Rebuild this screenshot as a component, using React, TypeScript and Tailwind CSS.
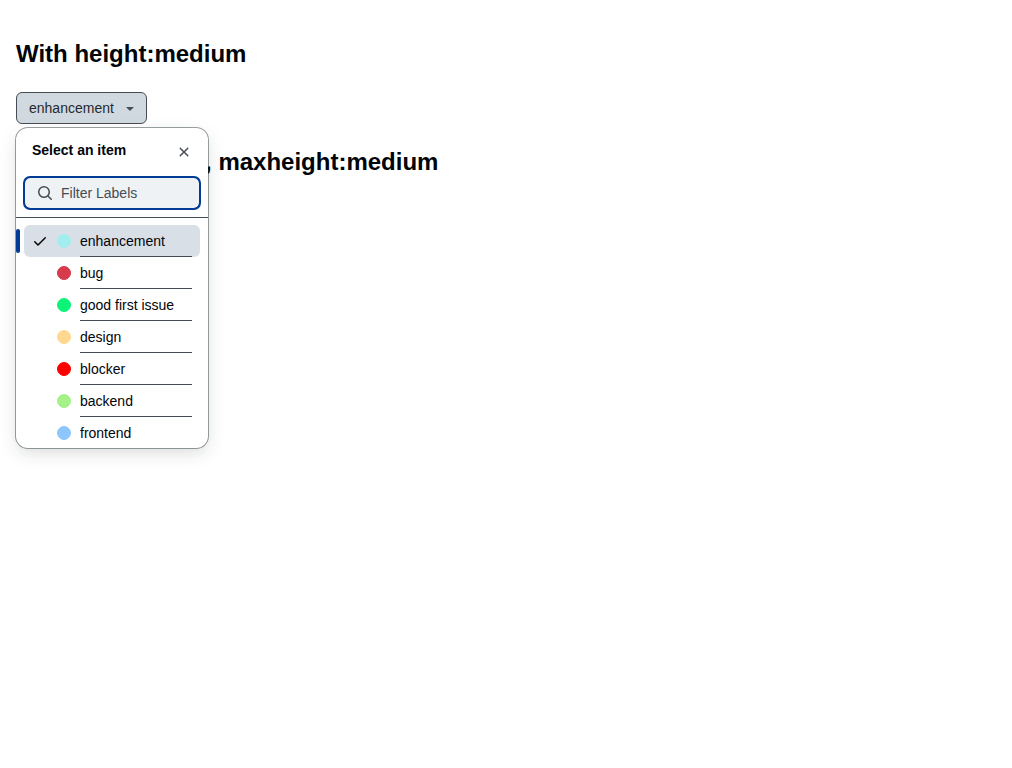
import React from 'react';

type Label = { name: string; dot: string };

const labels: Label[] = [
  { name: 'enhancement', dot: 'bg-[#a2eeef] border-[#a2eeef]' },
  { name: 'bug', dot: 'bg-[#d73a4a] border-[#d73a4a]' },
  { name: 'good first issue', dot: 'bg-[#0cf478] border-[#0cf478]' },
  { name: 'design', dot: 'bg-[#ffd78e] border-[#ffd78e]' },
  { name: 'blocker', dot: 'bg-[#ff0000] border-[#ff0000]' },
  { name: 'backend', dot: 'bg-[#a4f287] border-[#a4f287]' },
  { name: 'frontend', dot: 'bg-[#8dc6fc] border-[#8dc6fc]' },
];

function Icon({ d, className = '' }: { d: string; className?: string }) {
  return (
    <svg viewBox="0 0 16 16" width="16" height="16" fill="currentColor" aria-hidden="true" className={`shrink-0 ${className}`}>
      <path d={d} />
    </svg>
  );
}

const caret = 'm4.427 7.427 3.396 3.396a.25.25 0 0 0 .354 0l3.396-3.396A.25.25 0 0 0 11.396 7H4.604a.25.25 0 0 0-.177.427Z';
const cross =
  'M3.72 3.72a.75.75 0 0 1 1.06 0L8 6.94l3.22-3.22a.749.749 0 0 1 1.275.326.749.749 0 0 1-.215.734L9.06 8l3.22 3.22a.749.749 0 0 1-.326 1.275.749.749 0 0 1-.734-.215L8 9.06l-3.22 3.22a.751.751 0 0 1-1.042-.018.751.751 0 0 1-.018-1.042L6.94 8 3.72 4.78a.75.75 0 0 1 0-1.06Z';
const search =
  'M10.68 11.74a6 6 0 0 1-7.922-8.982 6 6 0 0 1 8.982 7.922l3.04 3.04a.749.749 0 0 1-.326 1.275.749.749 0 0 1-.734-.215ZM11.5 7a4.499 4.499 0 1 0-8.997 0A4.499 4.499 0 0 0 11.5 7Z';
const check =
  'M13.78 4.22a.75.75 0 0 1 0 1.06l-7.25 7.25a.75.75 0 0 1-1.06 0L2.22 9.28a.751.751 0 0 1 .018-1.042.751.751 0 0 1 1.042-.018L6 10.94l6.72-6.72a.75.75 0 0 1 1.06 0Z';

function Row({ label, selected, last }: { label: Label; selected: boolean; last: boolean }) {
  return (
    <li
      role="option"
      aria-selected={selected}
      className={`relative mx-2 flex h-8 items-stretch rounded-md px-2 ${selected ? 'bg-[#d9dfe7]' : ''}`}
    >
      {selected && <span className="absolute top-1 -left-2 h-6 w-1 rounded-md bg-[#023b95]" />}
      <span className="flex w-4 items-center">{selected && <Icon d={check} />}</span>
      <span className="ml-2 flex w-4 items-center justify-center">
        <span className={`size-3.5 rounded-full border ${label.dot}`} />
      </span>
      <span className={`ml-2 flex grow items-center border-b pt-px leading-5 ${last ? 'border-transparent' : 'border-[#454c54]'}`}>
        {label.name}
      </span>
    </li>
  );
}

function SelectPanel() {
  return (
    <div className="absolute top-9 left-0 h-80 w-48 overflow-hidden rounded-xl bg-white shadow-[0_0_0_1px_rgba(32,44,48,0.45),0_6px_12px_-3px_rgba(37,41,46,0.04),0_6px_18px_0_rgba(37,41,46,0.12)]">
      <header className="flex h-[49px] items-start justify-between pt-2 pr-2 pl-4">
        <h3 className="pt-1 font-bold leading-[21px]">Select an item</h3>
        <button aria-label="Close" className="flex size-8 items-center justify-center text-[#454c54]">
          <Icon d={cross} />
        </button>
      </header>
      <div className="border-b border-[#454c54] px-2 pb-2">
        <label className="flex h-8 items-center rounded-md border border-[#023b95] bg-[#eff2f5] pl-3 text-[#454c54] outline-2 -outline-offset-1 outline-[#023b95]">
          <Icon d={search} />
          <input
            placeholder="Filter Labels"
            className="ml-2 w-full min-w-0 bg-transparent leading-5 outline-none placeholder:text-[#454c54]"
          />
        </label>
      </div>
      <ul role="listbox" className="pt-[7px]">
        {labels.map((label, i) => (
          <Row key={label.name} label={label} selected={i === 0} last={i === labels.length - 1} />
        ))}
      </ul>
    </div>
  );
}

export default function App() {
  return (
    <main className="min-h-screen bg-white px-4 pt-9 font-['Liberation_Sans',Arial,sans-serif] text-sm text-[#010409]">
      <h2 className="mb-5 text-2xl leading-9 font-bold">With height:medium</h2>
      <div className="relative h-8">
        <button className="flex h-8 items-center gap-2 rounded-md border border-[#454c54] bg-[#d1d9e0] px-3 text-[#25292e]">
          <span className="leading-5">enhancement</span>
          <Icon d={caret} className="-mr-1 text-[#454c54]" />
        </button>
        <SelectPanel />
      </div>
      <h2 className="mt-5 text-2xl leading-9 font-bold">With height:auto, maxheight:medium</h2>
    </main>
  );
}
